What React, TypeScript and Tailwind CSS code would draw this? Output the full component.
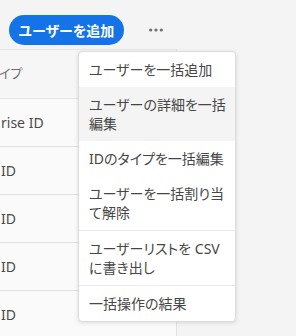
import { useState } from 'react'

const rows = ['rise ID', 'ID', 'ID', 'ID', 'ID']

const menuGroups = [
  ['ユーザーを一括追加', 'ユーザーの詳細を一括編集', 'IDのタイプを一括編集', 'ユーザーを一括割り当て解除'],
  ['ユーザーリストを CSV に書き出し'],
  ['一括操作の結果'],
]

function MoreIcon() {
  return (
    <svg width="14" height="4" viewBox="0 0 14 4" fill="#6e6e6e">
      <circle cx="1.7" cy="2" r="1.6" />
      <circle cx="7" cy="2" r="1.6" />
      <circle cx="12.3" cy="2" r="1.6" />
    </svg>
  )
}

export default function App() {
  const [hovered] = useState('ユーザーの詳細を一括編集')

  return (
    <div className="relative h-[336px] w-[296px] overflow-hidden bg-[#f4f4f4] font-['Noto_Sans','Noto_Sans_CJK_JP',sans-serif] [font-feature-settings:'palt']">
      <div className="flex h-[49px] items-start pl-[9px] pt-[15px]">
        <button className="flex h-[30px] w-[115px] items-center justify-center rounded-full bg-[#1473e6] text-[14px] font-bold text-white">
          ユーザーを追加
        </button>
        <button aria-label="More" className="ml-[16px] flex h-[30px] w-[32px] items-center justify-center">
          <MoreIcon />
        </button>
      </div>

      <div className="w-[177px] border-r border-[#e1e1e1]">
        <div className="flex h-[50px] items-center overflow-hidden border-t border-b border-[#e6e6e6] bg-[#f6f6f6] text-[13px] text-[#6e6e6e]">
          <span className="-ml-[1px] whitespace-nowrap">イプ</span>
        </div>
        {rows.map((label, i) => (
          <div
            key={i}
            className="flex h-[48px] items-center overflow-hidden border-b border-[#e1e1e1] bg-[#fafafa] text-[14px] text-[#4b4b4b]"
          >
            <span className={label === 'ID' ? 'pl-[1px] whitespace-nowrap' : 'pl-[1px] whitespace-nowrap'}>{label}</span>
          </div>
        ))}
      </div>

      <div className="absolute left-[78px] top-[51px] w-[158px] overflow-hidden rounded-[4px] border border-[#dcdcdc] bg-white shadow-[0_1px_4px_rgba(0,0,0,0.12)]">
        {menuGroups.map((group, g) => (
          <div key={g} className={g > 0 ? 'border-t border-[#eaeaea]' : ''}>
            {group.map((item) => (
              <div
                key={item}
                className={`py-[8px] pl-[10px] pr-[8px] text-[14px] leading-[19px] text-[#464646] ${
                  item === hovered ? 'bg-[#f4f4f4]' : ''
                }`}
              >
                {item}
              </div>
            ))}
          </div>
        ))}
      </div>
    </div>
  )
}
